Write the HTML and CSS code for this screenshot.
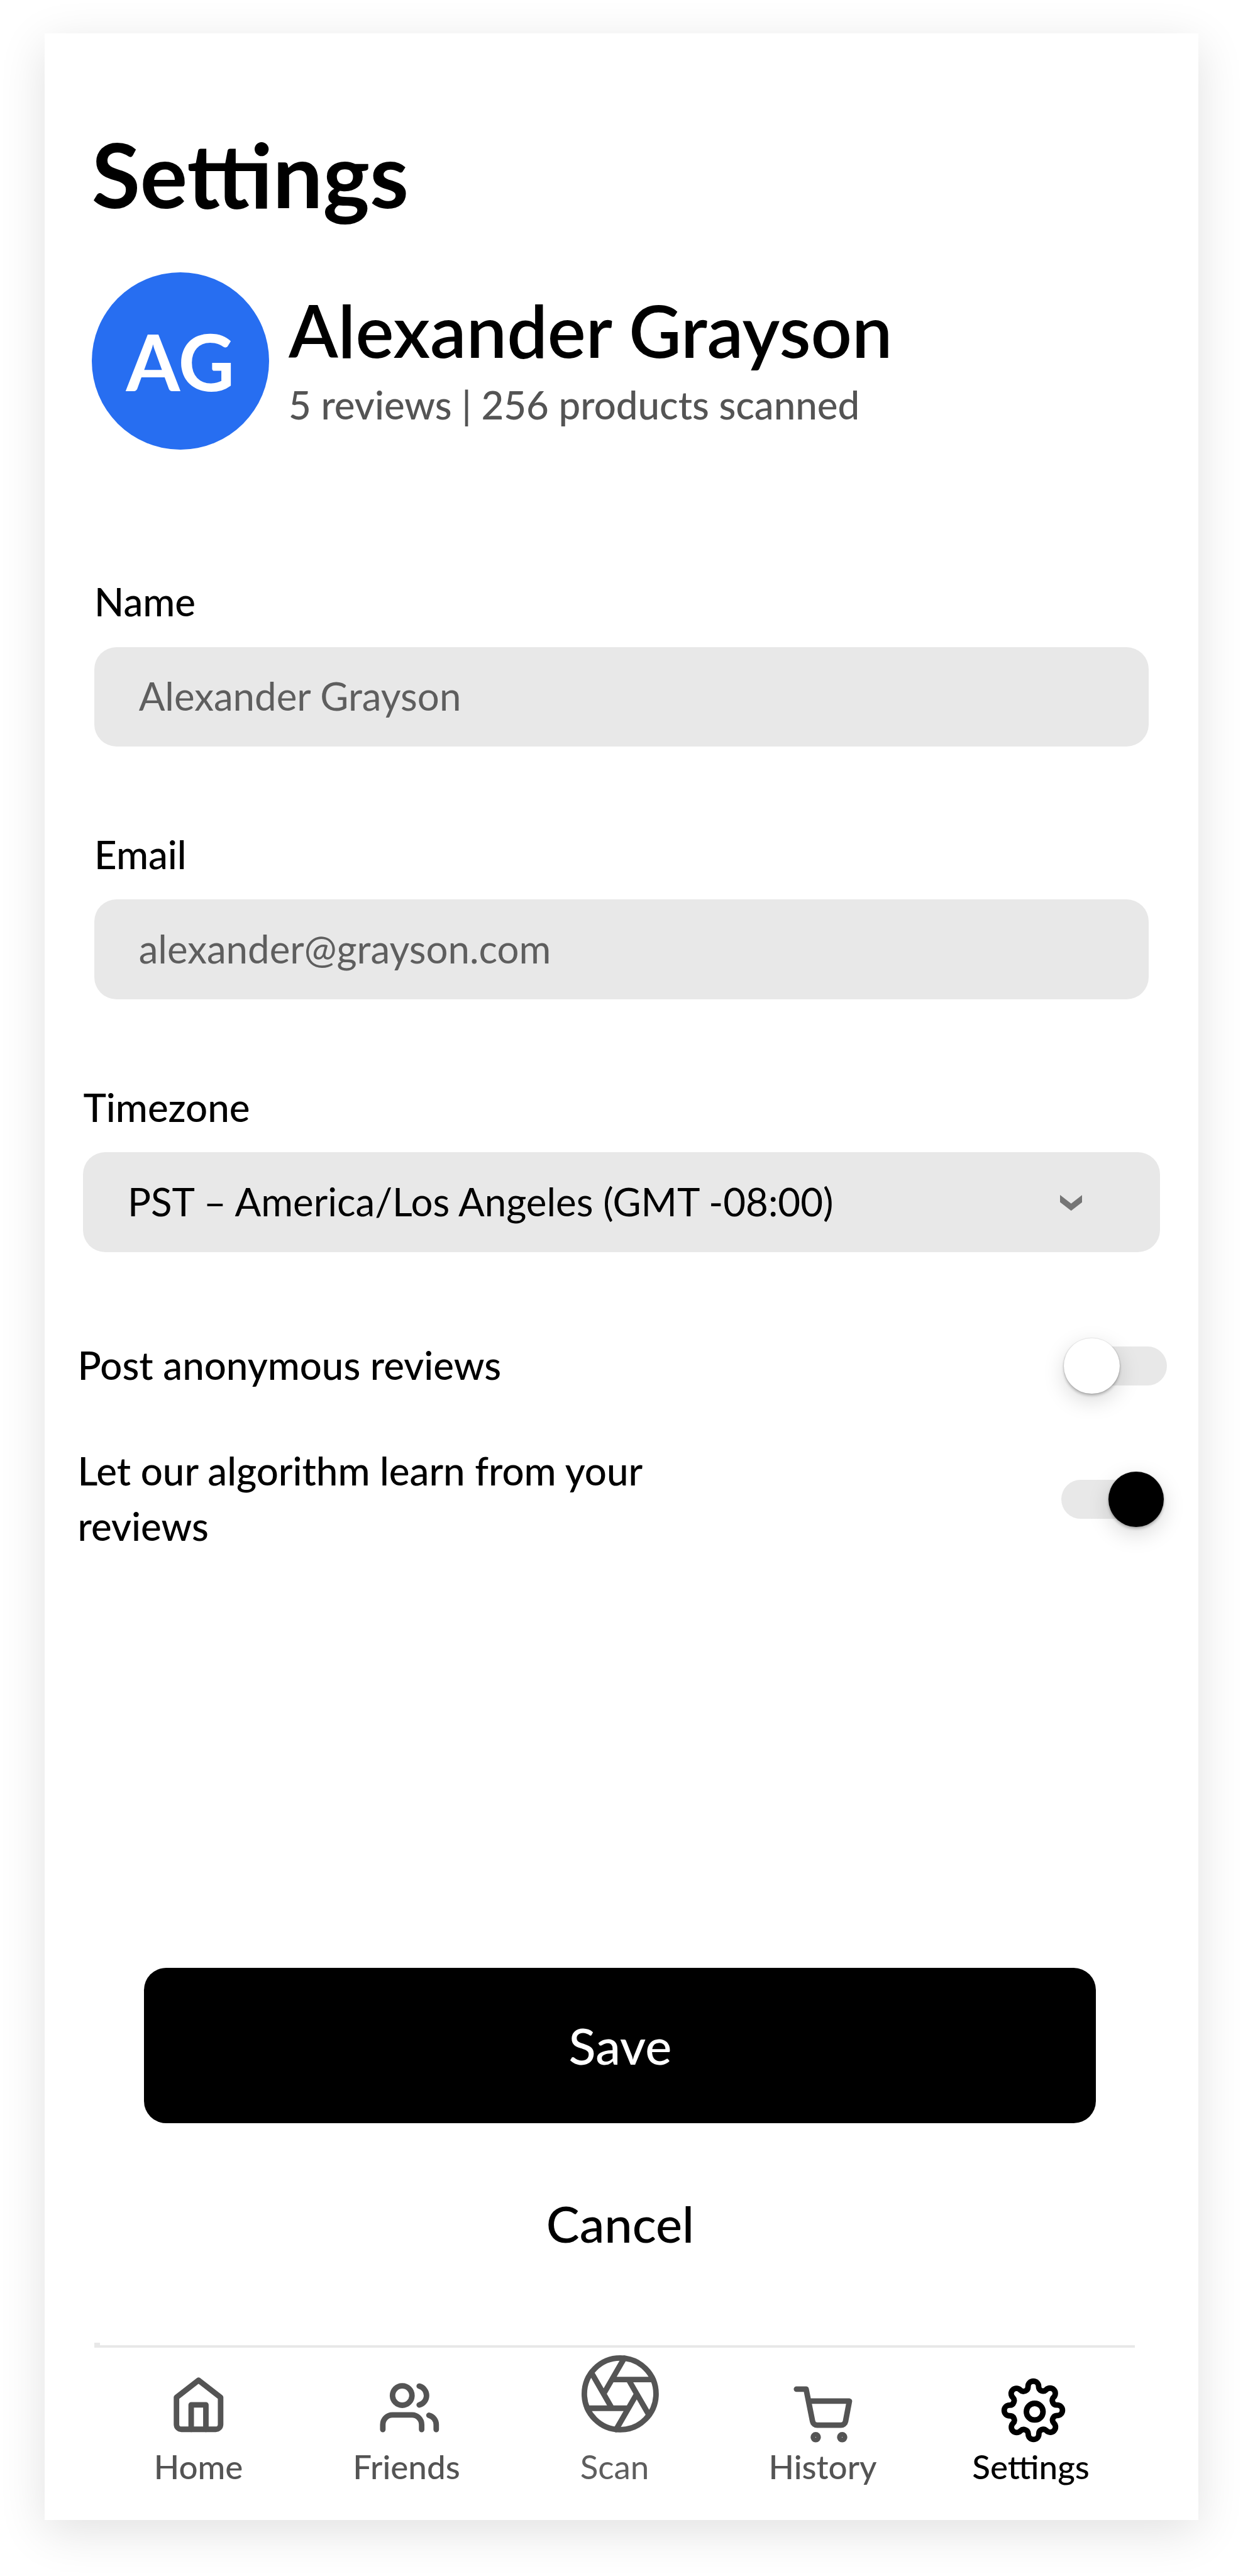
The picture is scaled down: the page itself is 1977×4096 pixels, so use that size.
FILE: index.html
```html
<!DOCTYPE html>
<html lang="en">
<head>
<meta charset="utf-8">
<title>Settings</title>
<link rel="stylesheet" href="styles.css">
</head>
<body>
<main class="card">
  <h1 class="title">Settings</h1>

  <section class="profile">
    <div class="avatar">AG</div>
    <div class="profile-text">
      <div class="profile-name">Alexander Grayson</div>
      <div class="profile-stats">5 reviews | 256 products scanned</div>
    </div>
  </section>

  <form class="form">
    <div class="field">
      <div class="label">Name</div>
      <div class="input">Alexander Grayson</div>
    </div>
    <div class="field">
      <div class="label">Email</div>
      <div class="input">alexander@grayson.com</div>
    </div>
    <div class="field field-wide">
      <div class="label">Timezone</div>
      <div class="input select">
        <span>PST – America/Los Angeles (GMT -08:00)</span>
        <svg class="chevron" viewBox="0 0 8 5.7"><path d="M0 0 4 3.1 8 0V2.6L4 5.7 0 2.6z"/></svg>
      </div>
    </div>
  </form>

  <section class="options">
    <div class="option">
      <div class="option-label">Post anonymous reviews</div>
      <div class="switch"><span class="track"></span><span class="knob"></span></div>
    </div>
    <div class="option">
      <div class="option-label">Let our algorithm learn from your reviews</div>
      <div class="switch switch-on"><span class="track"></span><span class="knob"></span></div>
    </div>
  </section>

  <section class="actions">
    <div class="button button-primary">Save</div>
    <div class="button">Cancel</div>
  </section>

  <div class="nav-tick"></div>
  <nav class="nav">
    <a class="nav-item">
      <svg class="icon icon-home" viewBox="0 0 24 24"><path d="M3 9l9-7 9 7v11a2 2 0 0 1-2 2H5a2 2 0 0 1-2-2z"/><path d="M9 22V12h6v10"/></svg>
      <span class="nav-label">Home</span>
    </a>
    <a class="nav-item">
      <svg class="icon icon-friends" viewBox="0 0 24 24"><path d="M17 21v-2a4 4 0 0 0-4-4H5a4 4 0 0 0-4 4v2"/><circle cx="9" cy="7" r="4"/><path d="M23 21v-2a4 4 0 0 0-3-3.87"/><path d="M16 3.13a4 4 0 0 1 0 7.75"/></svg>
      <span class="nav-label">Friends</span>
    </a>
    <a class="nav-item">
      <svg class="icon icon-scan" viewBox="0 0 24 24"><circle cx="12" cy="12" r="10"/><path d="M14.31 8l5.74 9.94M9.69 8h11.48M7.38 12l5.74-9.94M9.69 16L3.95 6.06M14.31 16H2.83M16.62 12l-5.74 9.94"/></svg>
      <span class="nav-label nav-label-soft">Scan</span>
    </a>
    <a class="nav-item">
      <svg class="icon icon-history" viewBox="0 0 24 24"><circle cx="9" cy="21" r="1"/><circle cx="20" cy="21" r="1"/><path d="M1 1h4l2.68 13.39a2 2 0 0 0 2 1.61h9.72a2 2 0 0 0 2-1.61L23 6H6"/></svg>
      <span class="nav-label">History</span>
    </a>
    <a class="nav-item nav-item-active">
      <svg class="icon icon-settings" viewBox="0 0 24 24"><circle cx="12.52" cy="12.52" r="3.14"/><path d="M19.4 15a1.65 1.65 0 0 0 .33 1.82l.06.06a2 2 0 0 1 0 2.83 2 2 0 0 1-2.83 0l-.06-.06a1.65 1.65 0 0 0-1.82-.33 1.65 1.65 0 0 0-1 1.51V21a2 2 0 0 1-2 2 2 2 0 0 1-2-2v-.09A1.65 1.65 0 0 0 9 19.4a1.65 1.65 0 0 0-1.82.33l-.06.06a2 2 0 0 1-2.83 0 2 2 0 0 1 0-2.83l.06-.06a1.65 1.65 0 0 0 .33-1.82 1.65 1.65 0 0 0-1.51-1H3a2 2 0 0 1-2-2 2 2 0 0 1 2-2h.09A1.65 1.65 0 0 0 4.6 9a1.65 1.65 0 0 0-.33-1.82l-.06-.06a2 2 0 0 1 0-2.83 2 2 0 0 1 2.83 0l.06.06a1.65 1.65 0 0 0 1.82.33H9a1.65 1.65 0 0 0 1-1.51V3a2 2 0 0 1 2-2 2 2 0 0 1 2 2v.09a1.65 1.65 0 0 0 1 1.51 1.65 1.65 0 0 0 1.82-.33l.06-.06a2 2 0 0 1 2.83 0 2 2 0 0 1 0 2.83l-.06.06a1.65 1.65 0 0 0-.33 1.82V9a1.65 1.65 0 0 0 1.51 1H21a2 2 0 0 1 2 2 2 2 0 0 1-2 2h-.09a1.65 1.65 0 0 0-1.51 1z"/></svg>
      <span class="nav-label">Settings</span>
    </a>
  </nav>
</main>
</body>
</html>
```
FILE: styles.css
```css
/* 1rem is ten layout units; the whole screen is 44.8rem by 92.8rem */
html {
  font-size: 44.135px;
}

*,
*::before,
*::after {
  box-sizing: border-box;
}

body {
  margin: 0;
  height: 92.8rem;
  padding: 1.2rem 1.6rem 2rem;
  overflow: hidden;
  background: #fff;
  color: #000;
  font-family: Lato, "Liberation Sans", sans-serif;
  font-size: 1.4rem;
  font-weight: 500;
  line-height: 2rem;
}

.card {
  display: flex;
  flex-direction: column;
  height: 89.6rem;
  padding-top: 3.084rem;
  background: #fff;
  box-shadow: 0 0.4rem 1.6rem rgba(0, 0, 0, 0.12);
}

.title {
  margin: 0 0 0 1.7rem;
  font-size: 3.2rem;
  font-weight: 700;
  line-height: 4rem;
}

.profile {
  display: flex;
  gap: 0.7rem;
  height: 6.4rem;
  margin: 1.516rem 0 0 1.7rem;
}

.avatar {
  display: flex;
  align-items: center;
  justify-content: center;
  width: 6.4rem;
  height: 6.4rem;
  padding-top: 0.03rem;
  border-radius: 50%;
  background: #276ef1;
  color: #fff;
  font-size: 2.8rem;
  font-weight: 700;
}

.profile-text {
  padding-top: 0.485rem;
}

.profile-name {
  font-size: 2.6rem;
  font-weight: 600;
  line-height: 3.2rem;
}

.profile-stats {
  margin-top: 0.085rem;
  color: #545454;
}

.form {
  display: flex;
  flex-direction: column;
  gap: 2.85rem;
  margin-top: 4.45rem;
}

.field {
  width: 38rem;
  margin-left: 1.8rem;
}

.field-wide {
  width: 38.8rem;
  margin-left: 1.4rem;
}

.label {
  padding-top: 0.02rem;
}

.input {
  display: flex;
  align-items: center;
  height: 3.6rem;
  margin-top: 0.635rem;
  padding: 0 1.6rem 0.08rem;
  border-radius: 0.8rem;
  background: #e8e8e8;
  color: #5e5e5e;
  font-weight: 400;
}

.select {
  justify-content: space-between;
  padding-right: 2.8rem;
  color: #000;
}

.chevron {
  width: 0.8rem;
  height: 0.57rem;
  margin-top: 0.11rem;
  fill: #757575;
}

.options {
  display: flex;
  flex-direction: column;
  gap: 1.8rem;
  margin: 3.055rem 1.15rem 0 1.2rem;
}

.option {
  display: flex;
  align-items: center;
  justify-content: space-between;
}

.option-label {
  width: 21.5rem;
}

.switch {
  display: grid;
  align-items: center;
  width: 3.7rem;
  height: 2rem;
  margin-top: 0.05rem;
  margin-bottom: -0.05rem;
}

.track,
.knob {
  grid-area: 1 / 1;
}

.track {
  justify-self: end;
  width: 3.4rem;
  height: 1.4rem;
  border-radius: 0.7rem;
  background: #e8e8e8;
}

.knob {
  width: 2rem;
  height: 2rem;
  border-radius: 50%;
  background: #fff;
  box-shadow:
    0 0 0 0.03rem rgba(0, 0, 0, 0.05),
    0 0.07rem 0.1rem rgba(0, 0, 0, 0.24),
    0 0.25rem 0.8rem rgba(0, 0, 0, 0.15);
}

.switch-on {
  margin-right: 0.1rem;
}

.switch-on .track {
  justify-self: start;
}

.switch-on .knob {
  justify-self: end;
  background: #000;
}

.actions {
  display: flex;
  flex-direction: column;
  gap: 0.8rem;
  width: 34.3rem;
  margin: 14.93rem 0 0 3.6rem;
}

.button {
  display: flex;
  align-items: center;
  justify-content: center;
  height: 5.6rem;
  padding-top: 0.03rem;
  border-radius: 0.8rem;
  font-size: 1.8rem;
}

.button-primary {
  background: #000;
  color: #fff;
}

.nav-tick {
  width: 0.2rem;
  height: 0.1rem;
  margin: 1.5rem 0 0 1.8rem;
  background: #e8e8e8;
}

.nav {
  display: flex;
  width: 37.5rem;
  margin-left: 1.8rem;
  border-top: 0.1rem solid #e8e8e8;
}

.nav-item {
  display: flex;
  flex-direction: column;
  align-items: center;
  width: 7.5rem;
  height: 5.08rem;
  color: #545454;
}

.nav-item-active {
  color: #000;
}

.nav-label {
  margin-top: auto;
  font-size: 1.2rem;
  line-height: 1.6rem;
}

.nav-label-soft {
  color: #5e5e5e;
  font-weight: 400;
}

.icon {
  flex: none;
  overflow: visible;
  fill: none;
  stroke: currentColor;
  stroke-linecap: round;
  stroke-linejoin: round;
}

.icon-home {
  width: 2.12rem;
  height: 2.12rem;
  margin-top: 0.99rem;
  stroke-width: 2.26;
}

.icon-friends {
  width: 2.1rem;
  height: 2.1rem;
  margin: 1.1rem 0 0 0.2rem;
  stroke-width: 2.28;
}

.icon-scan {
  width: 3.1rem;
  height: 3.1rem;
  margin: 0.1rem 0 0 0.4rem;
  stroke-width: 1.55;
}

.icon-history {
  width: 2.08rem;
  height: 2.08rem;
  margin: 1.41rem 0 -0.2rem;
  stroke-width: 2.3;
}

.icon-settings {
  width: 2.29rem;
  height: 2.29rem;
  margin: 1.105rem 0 0 0.2rem;
  stroke-width: 2.1;
}
```
